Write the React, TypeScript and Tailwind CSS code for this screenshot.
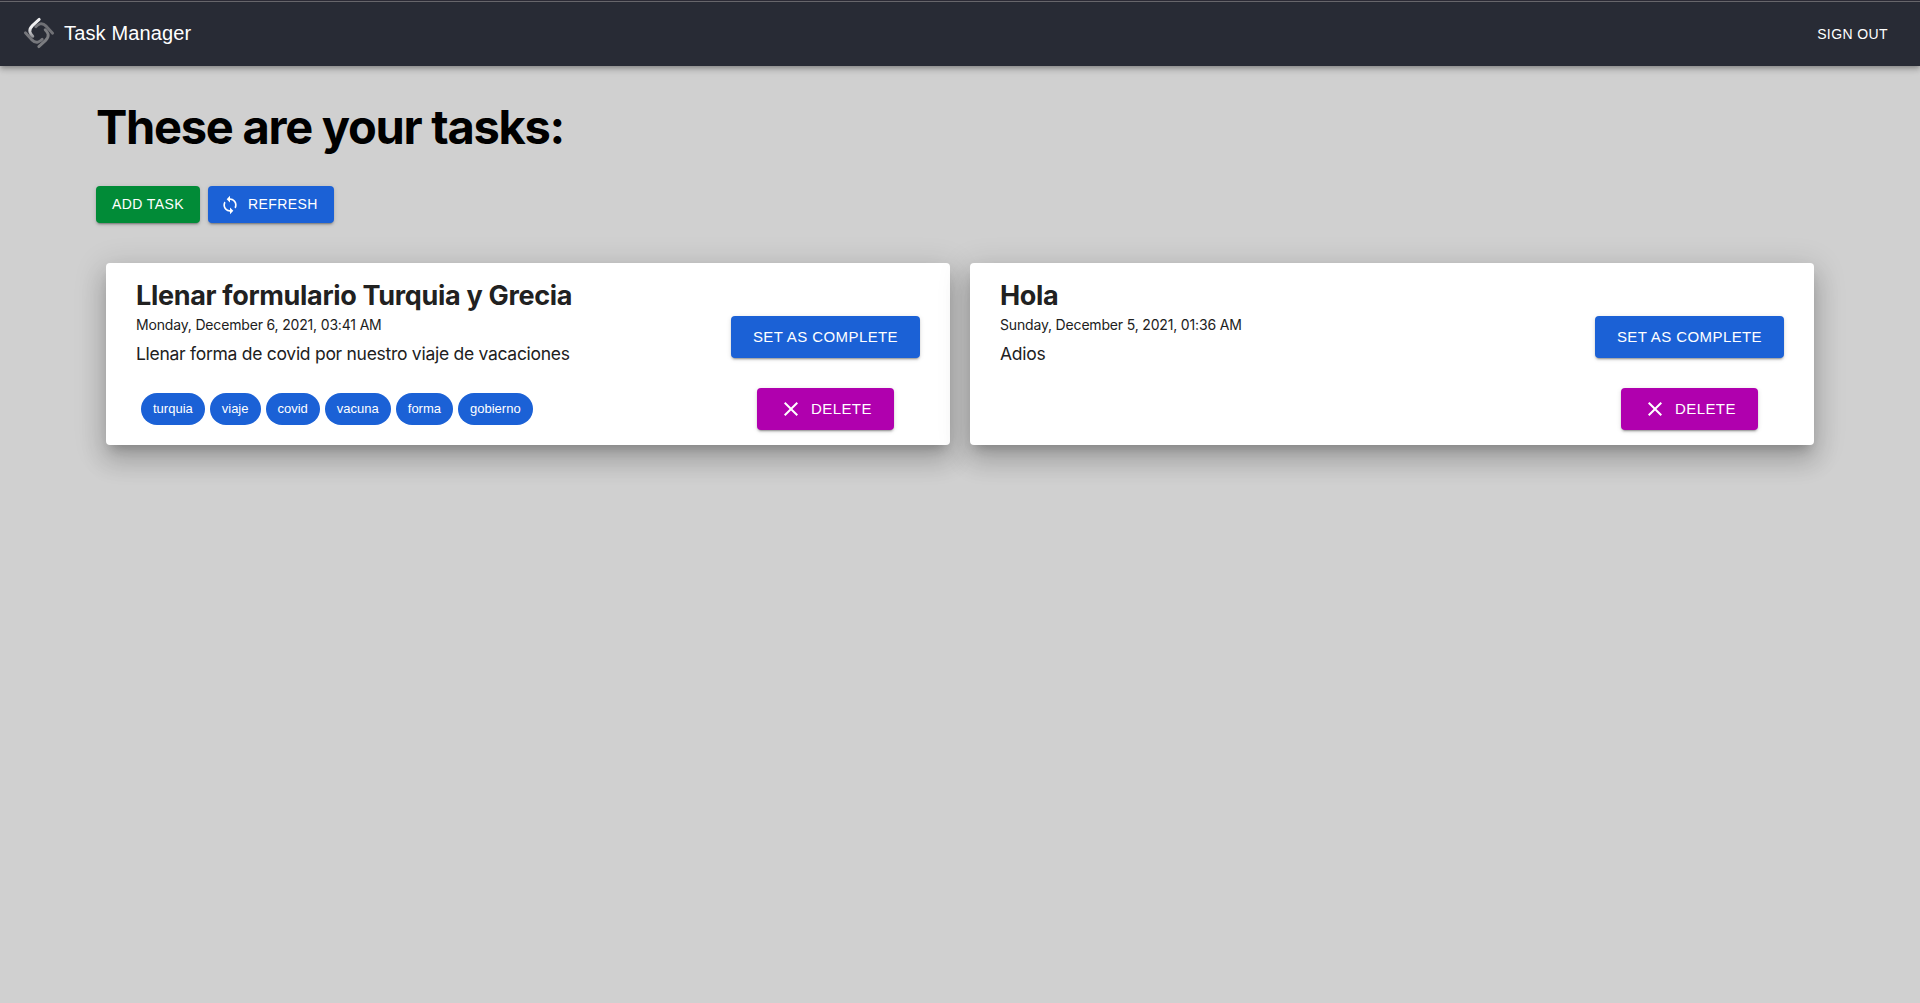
import React from "react";

type Task = { title: string; date: string; description: string; tags: string[] };

const tasks: Task[] = [
  {
    title: "Llenar formulario Turquia y Grecia",
    date: "Monday, December 6, 2021, 03:41 AM",
    description: "Llenar forma de covid por nuestro viaje de vacaciones",
    tags: ["turquia", "viaje", "covid", "vacuna", "forma", "gobierno"],
  },
  { title: "Hola", date: "Sunday, December 5, 2021, 01:36 AM", description: "Adios", tags: [] },
];

const raised =
  "rounded-[4px] text-white shadow-[0px_3px_1px_-2px_rgba(0,0,0,0.2),0px_2px_2px_0px_rgba(0,0,0,0.14),0px_1px_5px_0px_rgba(0,0,0,0.12)]";

const blade = "M16.2 2.4 L9.4 8.6 Q6.2 11.8 6.9 14.8 Q7.4 16.9 9.8 19.2";

function Logo() {
  return (
    <svg viewBox="0 0 32 32" className="h-8 w-8" fill="none" strokeWidth="2.9" strokeLinecap="round">
      <defs>
        <linearGradient id="blade-light" x1="0" y1="0" x2="0" y2="1">
          <stop offset="0.5" stopColor="#f0f0f2" />
          <stop offset="1" stopColor="#97989c" />
        </linearGradient>
      </defs>
      <path d={blade} stroke="#707176" transform="rotate(90 16 16)" />
      <path d={blade} stroke="#7c7d81" transform="rotate(180 16 16)" />
      <path d={blade} stroke="#76777c" transform="rotate(270 16 16)" />
      <path d={blade} stroke="url(#blade-light)" />
    </svg>
  );
}

function SyncIcon() {
  return (
    <svg viewBox="0 0 24 24" className="h-5 w-5" fill="currentColor">
      <path d="M12 4V1L8 5l4 4V6c3.31 0 6 2.69 6 6 0 1.01-.25 1.97-.7 2.8l1.46 1.46C19.54 15.03 20 13.57 20 12c0-4.42-3.58-8-8-8zm0 14c-3.31 0-6-2.69-6-6 0-1.01.25-1.97.7-2.8L5.24 7.74C4.46 8.97 4 10.43 4 12c0 4.42 3.58 8 8 8v3l4-4-4-4v3z" />
    </svg>
  );
}

function CloseIcon() {
  return (
    <svg viewBox="0 0 24 24" className="h-6 w-6" fill="currentColor">
      <path d="M19 6.41 17.59 5 12 10.59 6.41 5 5 6.41 10.59 12 5 17.59 6.41 19 12 13.41 17.59 19 19 17.59 13.41 12z" />
    </svg>
  );
}

function TaskCard({ task }: { task: Task }) {
  return (
    <article className="flex h-[182px] justify-between rounded-[4px] bg-white px-[30px] text-[#212121] shadow-[0px_8px_10px_-5px_rgba(0,0,0,0.2),0px_16px_24px_2px_rgba(0,0,0,0.14),0px_6px_30px_5px_rgba(0,0,0,0.12)]">
      <div className="flex flex-col">
        <h2 className="mt-[13px] h-[39px] text-[27px] leading-[40px] font-bold tracking-[-0.32px] whitespace-nowrap">{task.title}</h2>
        <p className="h-5 text-[14px] leading-5 tracking-[-0.17px] whitespace-nowrap">{task.date}</p>
        <p className="mt-[7px] h-6 text-[17.5px] leading-6 tracking-[-0.28px] whitespace-nowrap">{task.description}</p>
        <div className="mt-[27px] ml-[5px] flex gap-[5px] font-['Liberation_Sans',Arial,sans-serif]">
          {task.tags.map((tag) => (
            <span key={tag} className="flex h-8 items-center rounded-full bg-[#1b61d6] px-3 text-[13px] text-white">
              {tag}
            </span>
          ))}
        </div>
      </div>
      <div className="flex flex-col items-center gap-[30px] pt-[53px] font-['Liberation_Sans',Arial,sans-serif] text-[15px] tracking-[0.41px]">
        <button className={`flex h-[42px] w-[189px] items-center justify-center ${raised} bg-[#1b61d6]`}>SET AS COMPLETE</button>
        <button className={`flex h-[42px] w-[137px] items-center pl-[22px] ${raised} bg-[#b000ae]`}>
          <CloseIcon />
          <span className="ml-2">DELETE</span>
        </button>
      </div>
    </article>
  );
}

export default function App() {
  return (
    <div className="min-h-screen bg-[#d0d0d0] font-[Inter,sans-serif]">
      <header className="h-[66px] border-t border-[#2b2a35] bg-[#282b35] font-['Liberation_Sans',Arial,sans-serif] text-white shadow-[0px_2px_4px_-1px_rgba(0,0,0,0.2),0px_4px_5px_0px_rgba(0,0,0,0.14),0px_1px_10px_0px_rgba(0,0,0,0.12)]">
        <div className="flex h-full w-full items-center justify-between border-t border-[#67666b] pr-8 pl-[23px]">
          <div className="flex items-center pb-[2px]">
            <Logo />
            <span className="ml-[9px] text-[20px] tracking-[0.15px]">Task Manager</span>
          </div>
          <button className="text-[14px] tracking-[0.4px]">SIGN OUT</button>
        </div>
      </header>
      <main className="px-24">
        <h1 className="pt-[31px] text-[47px] leading-[60px] font-bold tracking-[-1.27px] whitespace-nowrap text-black">These are your tasks:</h1>
        <div className="mt-[29px] flex gap-2 font-['Liberation_Sans',Arial,sans-serif] text-[14px] tracking-[0.4px]">
          <button className={`flex h-[37px] w-[104px] items-center justify-center ${raised} bg-[#018b37]`}>ADD TASK</button>
          <button className={`flex h-[37px] w-[126px] items-center pl-3 ${raised} bg-[#1b61d6]`}>
            <SyncIcon />
            <span className="ml-2">REFRESH</span>
          </button>
        </div>
        <section className="mt-10 grid grid-cols-2 gap-5 px-[10px]">
          {tasks.map((task) => (
            <TaskCard key={task.title} task={task} />
          ))}
        </section>
      </main>
    </div>
  );
}
